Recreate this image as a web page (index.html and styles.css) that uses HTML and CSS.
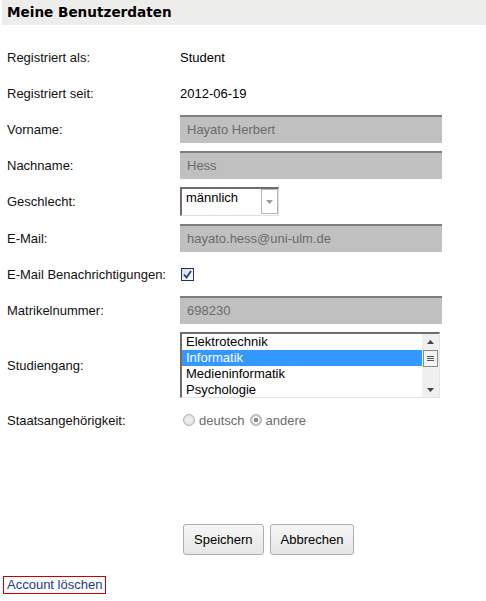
FILE: index.html
```html
<!DOCTYPE html>
<html lang="de">
<head>
    <meta charset="UTF-8">
    <meta name="viewport" content="width=device-width, initial-scale=1.0">
    <title>Meine Benutzerdaten</title>
    <link rel="stylesheet" href="styles.css">
</head>
<body>

    <h1 class="page-title">Meine Benutzerdaten</h1>

    <form class="user-form">
        <div class="row">
            <span class="label">Registriert als:</span>
            <span class="value">Student</span>
        </div>
        <div class="row">
            <span class="label">Registriert seit:</span>
            <span class="value">2012-06-19</span>
        </div>
        <div class="row">
            <label class="label" for="vorname">Vorname:</label>
            <input class="field" type="text" id="vorname" value="Hayato Herbert" disabled>
        </div>
        <div class="row">
            <label class="label" for="nachname">Nachname:</label>
            <input class="field" type="text" id="nachname" value="Hess" disabled>
        </div>
        <div class="row">
            <span class="label">Geschlecht:</span>
            <div class="dropdown">
                <span class="dropdown-text">männlich</span>
                <span class="dropdown-btn">
                    <svg width="7" height="4" viewBox="0 0 7 4"><path d="M0 0h7L3.5 4z" fill="#9a9a9a"/></svg>
                </span>
            </div>
        </div>
        <div class="row">
            <label class="label" for="email">E-Mail:</label>
            <input class="field" type="text" id="email" value="hayato.hess@uni-ulm.de" disabled>
        </div>
        <div class="row">
            <span class="label">E-Mail Benachrichtigungen:</span>
            <span class="checkbox">
                <svg width="9" height="9" viewBox="0 0 9 9"><path d="M1 4.5l2.5 3L8 1" fill="none" stroke="#21399b" stroke-width="1.8"/></svg>
            </span>
        </div>
        <div class="row">
            <label class="label" for="matrikel">Matrikelnummer:</label>
            <input class="field" type="text" id="matrikel" value="698230" disabled>
        </div>
        <div class="row row-list">
            <span class="label">Studiengang:</span>
            <div class="listbox">
                <ul class="list-items">
                    <li>Elektrotechnik</li>
                    <li class="selected">Informatik</li>
                    <li>Medieninformatik</li>
                    <li>Psychologie</li>
                </ul>
                <div class="scrollbar">
                    <svg width="7" height="4" viewBox="0 0 7 4"><path d="M0 4h7L3.5 0z" fill="#444"/></svg>
                    <span class="thumb">
                        <svg width="7" height="7" viewBox="0 0 7 7"><path d="M0 1.5h7M0 3.5h7M0 5.5h7" stroke="#555" stroke-width="1"/></svg>
                    </span>
                    <span class="track"></span>
                    <svg width="7" height="4" viewBox="0 0 7 4"><path d="M0 0h7L3.5 4z" fill="#444"/></svg>
                </div>
            </div>
        </div>
        <div class="row row-radio">
            <span class="label">Staatsangehörigkeit:</span>
            <span class="radios">
                <span class="radio"></span> deutsch
                <span class="radio checked"></span> andere
            </span>
        </div>

        <div class="buttons">
            <button type="button">Speichern</button>
            <button type="button">Abbrechen</button>
        </div>
    </form>

    <a class="delete-link" href="#">Account löschen</a>

</body>
</html>
```

FILE: styles.css
```css
body {
    margin: 0;
    font-family: "Liberation Sans", Arial, sans-serif;
    font-size: 13px;
    color: #000;
    background: #fff;
}
.page-title {
    margin: 0 0 0 2px;
    height: 25px;
    padding-left: 5px;
    background-color: #ededeb;
    font-family: "DejaVu Sans", Verdana, sans-serif;
    font-size: 13.6px;
    font-weight: bold;
    line-height: 25px;
}
.user-form {
    padding: 18px 0 0 7px;
}
.row {
    display: grid;
    grid-template-columns: 173px 1fr;
    align-items: center;
    min-height: 28px;
    margin-bottom: 8px;
}
.row-radio {
    margin-top: 5px;
}
.label {
    color: #111;
}
.field {
    box-sizing: border-box;
    width: 262px;
    height: 28px;
    margin: 0;
    padding: 0 0 1px 7px;
    border: none;
    border-top: 2px solid #7f7f7f;
    background-color: #c0c0c0;
    font-family: inherit;
    font-size: 13px;
    color: #6b6b6b;
}
.dropdown {
    box-sizing: border-box;
    display: flex;
    justify-content: space-between;
    width: 99px;
    height: 29px;
    border-top: 2px solid #6d6d6d;
    border-left: 2px solid #6d6d6d;
    border-right: 1px solid #e0e0e0;
    border-bottom: 1px solid #e0e0e0;
}
.dropdown-text {
    padding: 1px 0 0 4px;
}
.dropdown-btn {
    box-sizing: border-box;
    display: flex;
    align-items: center;
    justify-content: center;
    width: 17px;
    height: 25px;
    border: 1px solid #b5b5b5;
    background: #fff;
}
.checkbox {
    box-sizing: border-box;
    display: flex;
    align-items: center;
    justify-content: center;
    width: 13px;
    height: 13px;
    margin-left: 1px;
    border: 1px solid #1f2f70;
    background: linear-gradient(135deg, #dcdcdc, #fff);
}
.listbox {
    box-sizing: border-box;
    display: flex;
    width: 260px;
    height: 66px;
    border-top: 2px solid #6d6d6d;
    border-left: 2px solid #6d6d6d;
    border-right: 1px solid #e4e4e4;
    border-bottom: 1px solid #e4e4e4;
}
.list-items {
    flex: 1;
    margin: 0;
    padding: 0;
    list-style: none;
}
.list-items li {
    height: 16px;
    padding-left: 4px;
    line-height: 16px;
}
.list-items .selected {
    background-color: #3399ff;
    color: #fff;
}
.scrollbar {
    display: flex;
    flex-direction: column;
    align-items: center;
    width: 17px;
    padding-top: 6px;
    padding-bottom: 5px;
    box-sizing: border-box;
    background-color: #f0f0f0;
}
.thumb {
    display: flex;
    align-items: center;
    justify-content: center;
    box-sizing: border-box;
    width: 15px;
    height: 17px;
    margin-top: 6px;
    border: 1px solid #888;
    background: #f4f4f4;
}
.track {
    flex: 1;
}
.radios {
    display: flex;
    align-items: center;
    color: #6b6b6b;
}
.radio {
    box-sizing: border-box;
    display: inline-block;
    width: 12px;
    height: 12px;
    margin: 0 4px 0 3px;
    border: 1px solid #b0b0b0;
    border-radius: 50%;
    background: radial-gradient(circle, #f4f4f4, #dcdcdc);
}
.radio.checked {
    margin-left: 5px;
    background: radial-gradient(circle, #8a8a8a 0 2px, #f2f2f2 2.5px 3.5px, #c8c8c8 4px);
}
.buttons {
    display: flex;
    gap: 6px;
    padding: 82px 0 0 176px;
}
.buttons button {
    height: 31px;
    padding: 0 10px;
    border: 1px solid #adadad;
    border-radius: 3px;
    background: linear-gradient(#f6f6f6, #e6e6e6);
    font-family: inherit;
    font-size: 13px;
    color: #000;
}
.delete-link {
    display: inline-block;
    margin: 21px 0 0 3px;
    padding: 0 3px;
    border: 1px solid #d10000;
    color: #1b3a8c;
    text-decoration: none;
    line-height: 16px;
}
```
